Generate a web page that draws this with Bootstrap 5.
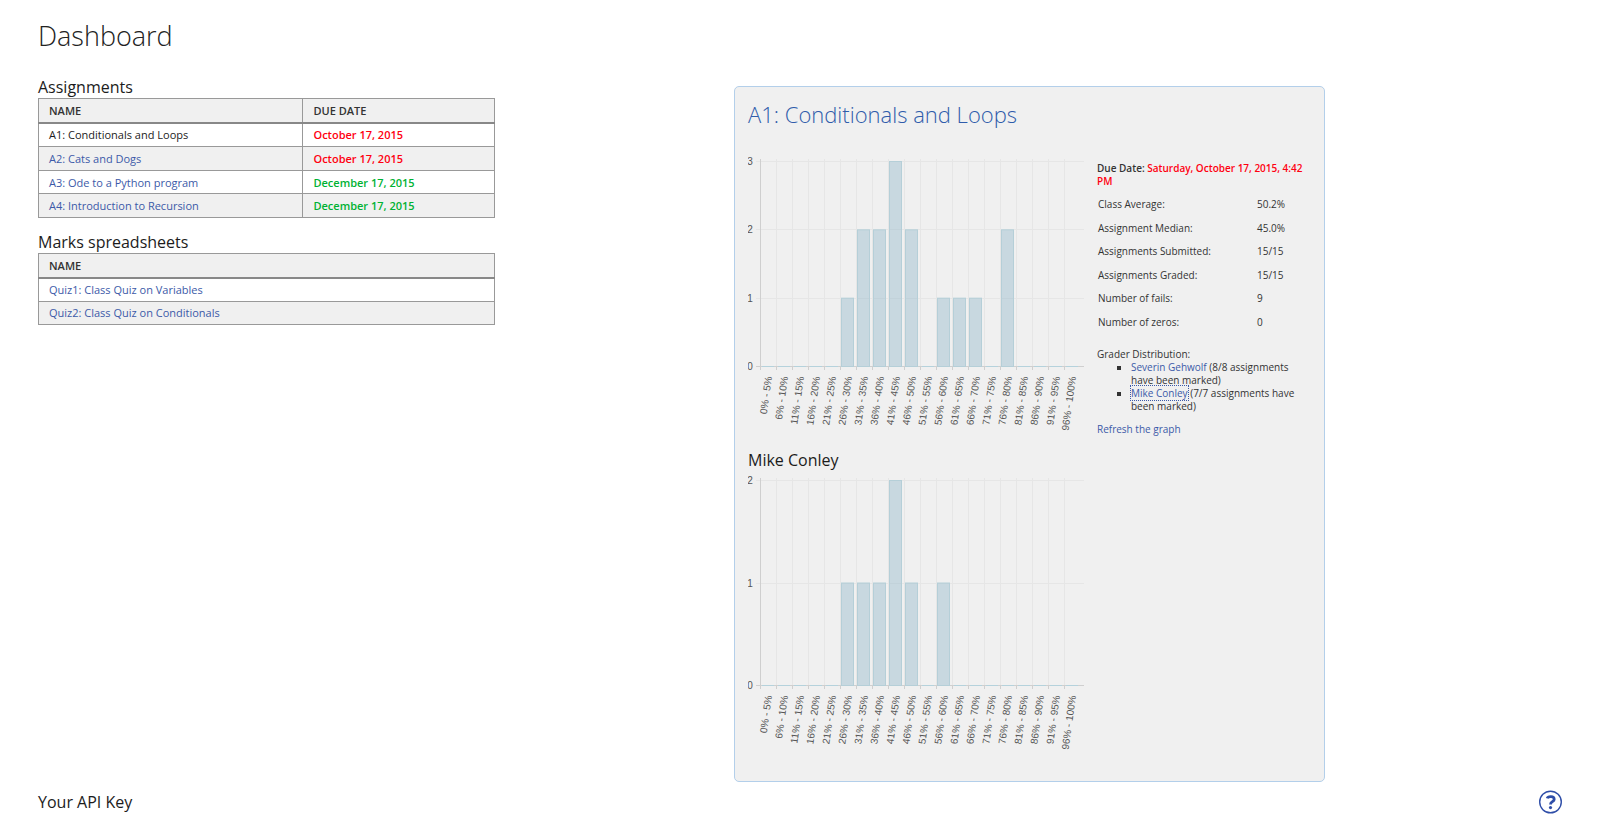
<!DOCTYPE html>
<html lang="en">
<head>
<meta charset="utf-8">
<meta name="viewport" content="width=device-width, initial-scale=1">
<title>Dashboard</title>
<link href="https://cdn.jsdelivr.net/npm/bootstrap@5.3.0/dist/css/bootstrap.min.css" rel="stylesheet">
<style>
body { font-family: "Open Sans", sans-serif; font-size: 11px; line-height: 13px; color: #333; background: #fff; }
a { color: #3c5aa8; text-decoration: none; }
.page { padding: 0 38px; }
h1 { font-size: 27px; line-height: 36px; font-weight: 300; margin: 18px 0 22px; color: #222; }
h2 { font-size: 16px; line-height: 22px; font-weight: 400; margin: 0; color: #1c1c1c; }
.overview { display: grid; grid-template-columns: 457fr 239fr 591fr 237fr; }
.listing { width: 100%; border-collapse: collapse; border: 1px solid #999; margin-bottom: 13px; }
.listing th, .listing td { border: 1px solid #999; padding: 0 10px; }
.listing th { background: #f0f0f0; font-weight: 600; height: 24px; border-bottom: 2px solid #888; }
.listing.assignments { height: 120px; }
.listing.spreadsheets { height: 72px; }
.listing tbody tr:nth-child(even) { background: #f0f0f0; }
.listing .col-name { width: 58%; }
.listing a.current { color: #1c1c1c; }
.due { font-weight: 600; }
.late { color: #ff0010; }
.open { color: #00b233; }
.panel { grid-column: 3; margin-top: 10px; padding: 14px 14px 13px 13px; background: #f0f0f0; border: 1px solid #b3cfea; border-radius: 5px; }
.panel h3 { font-size: 22px; line-height: 26px; font-weight: 300; margin: 0 0 27px; }
.panel h3 a { color: #2f5cab; }
.chart { display: block; width: 336px; height: 295px; }
#grader-chart { margin-top: 2px; }
.chart text { font: 10px "Liberation Sans", sans-serif; fill: #555; text-anchor: end; }
.chart .tick-value { text-anchor: middle; }
.summary { font-size: 10px; padding: 8px 4px 0 13px; }
.stats { width: 100%; height: 141px; margin: 5px 0 14px; }
.stats th, .stats td { padding: 0 1px; font-weight: 400; }
.stats td { width: 50px; }
.graders { list-style: square; padding-left: 34px; margin: 0 0 10px; }
.graders a.active-grader { outline: 1px dotted #3c5aa8; }
.help { width: 24px; height: 24px; padding: 0; border: 0; background: none; }
</style>
</head>
<body>
<div class="page">
  <header><h1>Dashboard</h1></header>
  <main class="overview">
    <section>
      <h2>Assignments</h2>
      <table class="listing assignments">
        <thead><tr><th class="col-name" scope="col">NAME</th><th scope="col">DUE DATE</th></tr></thead>
        <tbody>
          <tr><td><a class="current" href="#">A1: Conditionals and Loops</a></td><td class="due late">October 17, 2015</td></tr>
          <tr><td><a href="#">A2: Cats and Dogs</a></td><td class="due late">October 17, 2015</td></tr>
          <tr><td><a href="#">A3: Ode to a Python program</a></td><td class="due open">December 17, 2015</td></tr>
          <tr><td><a href="#">A4: Introduction to Recursion</a></td><td class="due open">December 17, 2015</td></tr>
        </tbody>
      </table>
      <h2>Marks spreadsheets</h2>
      <table class="listing spreadsheets">
        <thead><tr><th scope="col">NAME</th></tr></thead>
        <tbody>
          <tr><td><a href="#">Quiz1: Class Quiz on Variables</a></td></tr>
          <tr><td><a href="#">Quiz2: Class Quiz on Conditionals</a></td></tr>
        </tbody>
      </table>
    </section>
    <section class="panel">
      <h3><a href="#">A1: Conditionals and Loops</a></h3>
      <div class="d-flex">
        <div class="flex-shrink-0"><svg class="chart" id="class-chart" role="img" aria-label="Class grade distribution"></svg></div>
        <div class="summary flex-grow-1">
          <div class="due">Due Date: <span class="late">Saturday, October 17, 2015, 4:42 PM</span></div>
          <table class="stats">
            <tr><th scope="row">Class Average:</th><td>50.2%</td></tr>
            <tr><th scope="row">Assignment Median:</th><td>45.0%</td></tr>
            <tr><th scope="row">Assignments Submitted:</th><td>15/15</td></tr>
            <tr><th scope="row">Assignments Graded:</th><td>15/15</td></tr>
            <tr><th scope="row">Number of fails:</th><td>9</td></tr>
            <tr><th scope="row">Number of zeros:</th><td>0</td></tr>
          </table>
          <div>Grader Distribution:</div>
          <ul class="graders">
            <li><a href="#">Severin Gehwolf</a> (8/8 assignments have been marked)</li>
            <li><a class="active-grader" href="#">Mike Conley</a> (7/7 assignments have been marked)</li>
          </ul>
          <a href="#">Refresh the graph</a>
        </div>
      </div>
      <h2>Mike Conley</h2>
      <svg class="chart" id="grader-chart" role="img" aria-label="Grade distribution for Mike Conley"></svg>
    </section>
  </main>
  <footer class="d-flex justify-content-between align-items-center pt-1 mt-1">
    <h2>Your API Key</h2>
    <button class="help" type="button" aria-label="Help">
      <svg class="d-block" width="24" height="24" viewBox="0 0 24 24" fill="none" stroke="#2f4ea8">
        <circle cx="12.5" cy="12" r="10.8" stroke-width="1.4"/>
        <path d="M9.2 8.4C9.9 6.1 16.1 5.7 16.2 9.2C16.3 11.8 12.5 11.6 12.5 14.4" stroke-width="2.8"/>
        <circle cx="12.5" cy="17.6" r="1.6" fill="#2f4ea8" stroke="none"/>
      </svg>
    </button>
  </footer>
</div>
<script src="https://cdn.jsdelivr.net/npm/bootstrap@5.3.0/dist/js/bootstrap.bundle.min.js"></script>
<script>
function drawChart(id, counts, max) {
  const left = 12, top = 7, base = 212, step = 16, right = 336;
  let s = '';
  const line = (x1, y1, x2, y2, c) => `<path d="M${x1} ${y1}L${x2} ${y2}" stroke="${c}"/>`;
  for (let v = 0; v <= max; v++) {
    const y = Math.round(base - v * (base - top) / max) + 0.5;
    s += line(left - 4, y, right, y, v ? '#e6e6e6' : '#cfcfcf');
    s += `<text class="tick-value" x="2" y="${y + 3}">${v}</text>`;
  }
  counts.forEach((n, i) => {
    const x = left + i * step;
    s += line(x + 0.5, top - 2, x + 0.5, base, i ? '#e6e6e6' : '#cfcfcf');
    s += line(x + 0.5, base, x + 0.5, base + 4, '#cfcfcf');
    const h = n * (base - top) / max;
    s += n ? `<rect x="${x + 1.5}" y="${base - h + 0.5}" width="12" height="${h}" fill="#97bbcd" fill-opacity="0.45" stroke="#b5cfd8"/>`
           : line(x + 2, base + 0.5, x + 14, base + 0.5, '#b5d2dc');
    const low = i ? i * 5 + 1 : 0;
    s += `<text transform="translate(${x + 12} ${base + 11}) rotate(-82)">${low}% - ${i * 5 + 5}%</text>`;
  });
  document.getElementById(id).innerHTML = s;
}
drawChart('class-chart', [0,0,0,0,0,1,2,2,3,2,0,1,1,1,0,2,0,0,0,0], 3);
drawChart('grader-chart', [0,0,0,0,0,1,1,1,2,1,0,1,0,0,0,0,0,0,0,0], 2);
</script>
</body>
</html>
